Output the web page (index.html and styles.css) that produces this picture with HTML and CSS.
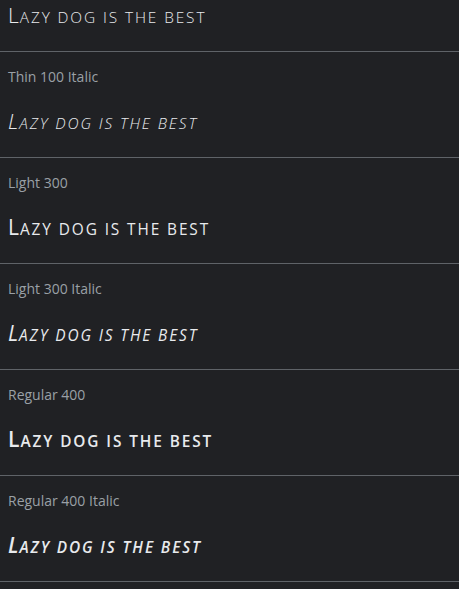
FILE: index.html
```html
<!DOCTYPE html>
<html>
<head>
<meta charset="utf-8">
<link rel="stylesheet" href="styles.css">
</head>
<body>
<div class="list">
  <div class="item">
    <div class="label">Thin 100</div>
    <div class="sample w100">L<span class="sc">azy dog is the best</span></div>
  </div>
  <div class="item">
    <div class="label">Thin 100 Italic</div>
    <div class="sample w100 it">L<span class="sc">azy dog is the best</span></div>
  </div>
  <div class="item">
    <div class="label">Light 300</div>
    <div class="sample w300">L<span class="sc">azy dog is the best</span></div>
  </div>
  <div class="item">
    <div class="label">Light 300 Italic</div>
    <div class="sample w300 it">L<span class="sc">azy dog is the best</span></div>
  </div>
  <div class="item">
    <div class="label">Regular 400</div>
    <div class="sample w400">L<span class="sc">azy dog is the best</span></div>
  </div>
  <div class="item">
    <div class="label">Regular 400 Italic</div>
    <div class="sample w400 it">L<span class="sc">azy dog is the best</span></div>
  </div>
</div>
</body>
</html>
```
FILE: styles.css
```css
html, body {
  margin: 0;
  padding: 0;
  background: #202124;
  overflow: hidden;
}
.list {
  margin-top: -54px;
  display: flex;
  flex-direction: column;
}
.item {
  border-bottom: 1px solid #5f6368;
  padding: 15px 8px 20px;
  display: flex;
  flex-direction: column;
  gap: 19px;
}
.label {
  font-family: "Open Sans", sans-serif;
  font-size: 14px;
  line-height: 20px;
  color: #9aa0a6;
}
.sample {
  font-family: "Open Sans", sans-serif;
  font-size: 21px;
  line-height: 31px;
  height: 31px;
  color: #e8eaed;
  white-space: nowrap;
  letter-spacing: 1px;
}
.sc {
  text-transform: uppercase;
  font-size: 15.4px;
  letter-spacing: 1.9px;
}
.w100 { font-weight: 300; }
.w300 { font-weight: 400; }
.w400 { font-weight: 600; }
.it { font-style: italic; }
```
